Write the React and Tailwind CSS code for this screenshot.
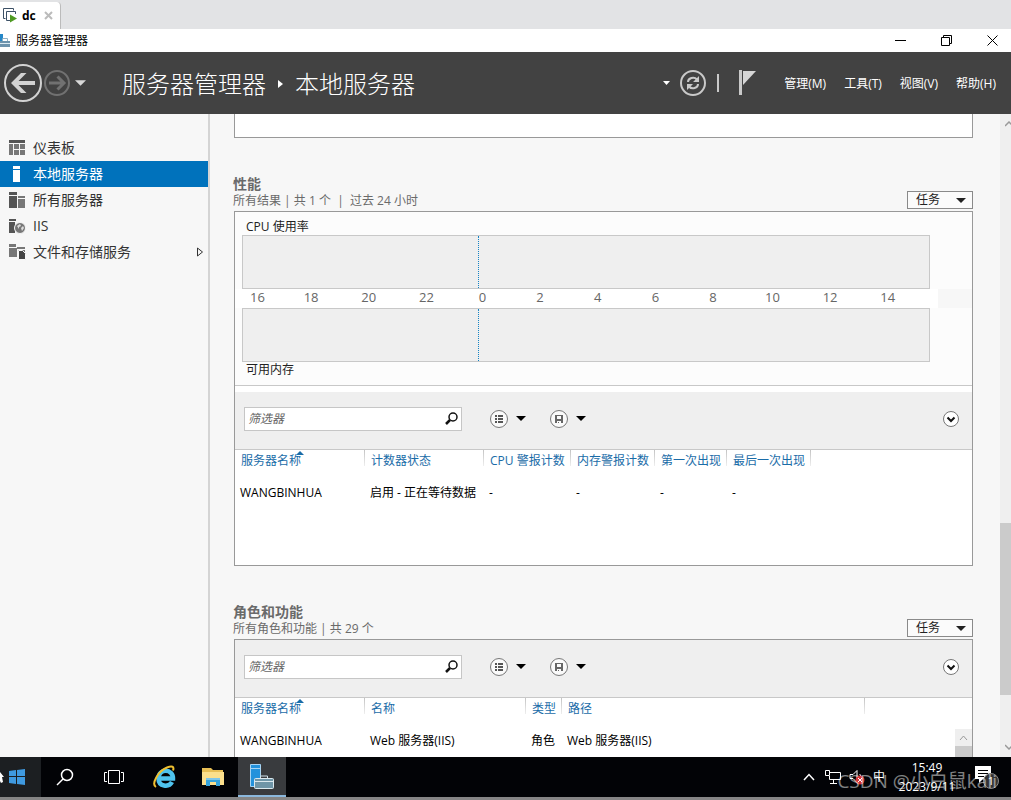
import React, { useState } from 'react';

const navItems = [
  { id: 'dashboard', label: '仪表板' },
  { id: 'local', label: '本地服务器' },
  { id: 'all', label: '所有服务器' },
  { id: 'iis', label: 'IIS' },
  { id: 'files', label: '文件和存储服务', expandable: true },
];

const menus = ['管理(M)', '工具(T)', '视图(V)', '帮助(H)'];
const hours = [16, 18, 20, 22, 0, 2, 4, 6, 8, 10, 12, 14];

const performance = {
  columns: [
    { label: '服务器名称', width: 130, sorted: true },
    { label: '计数器状态', width: 119 },
    { label: 'CPU 警报计数', width: 87 },
    { label: '内存警报计数', width: 84 },
    { label: '第一次出现', width: 72 },
    { label: '最后一次出现', width: 84 },
  ],
  rows: [['WANGBINHUA', '启用 - 正在等待数据', '-', '-', '-', '-']],
};

const roles = {
  columns: [
    { label: '服务器名称', width: 130, sorted: true },
    { label: '名称', width: 161 },
    { label: '类型', width: 36 },
    { label: '路径', width: 303 },
  ],
  rows: [['WANGBINHUA', 'Web 服务器(IIS)', '角色', 'Web 服务器(IIS)']],
};

function NavIcon({ id }) {
  return (
    <svg width="17" height="16" viewBox="0 0 17 16" aria-hidden="true">
      {id === 'dashboard' && (
        <>
          <path fill="#555" d="M0 0h16v3H0z" />
          <path fill="#777" d="M0 4h4v11H0zM5 4h5v5H5zM11 4h5v5h-5zM5 10h5v5H5zM11 10h5v5h-5z" />
        </>
      )}
      {id === 'local' && <path fill="#fff" d="M4 0h7v3H4zM4 4h7v12H4z" />}
      {id === 'all' && (
        <>
          <path fill="#555" d="M0 0h8v3H0zM0 4h8v12H0z" />
          <path fill="#777" d="M9 4h7v2H9zM9 7h7v9H9z" />
        </>
      )}
      {id === 'iis' && (
        <>
          <path fill="#555" d="M0 1h7v2H0zM0 4h6v11H0z" />
          <circle cx="11" cy="10" r="5.500" fill="#777" stroke="#f7f7f7" />
          <path fill="#ddd" d="M8 8l3-2 1 2-2 1v2zM12 10l2-2 1 2-2 3z" />
        </>
      )}
      {id === 'files' && (
        <>
          <path fill="#777" d="M0 0h7v3H0zM0 4h8v9H0zM8 3h8v2H8zM9 6h7v7H9z" />
          <path fill="#444" stroke="#f7f7f7" d="M9.500 6.500h4l3 3v6h-7z" />
        </>
      )}
    </svg>
  );
}

function Caret({ className }) {
  return (
    <svg width="10" height="5" viewBox="0 0 10 5" className={className} aria-hidden="true">
      <path fill="currentColor" d="M0 0h10L5 5z" />
    </svg>
  );
}

function WindowTab() {
  return (
    <div className="flex h-[29px] shrink-0 items-end bg-[#e2e3e5]">
      <div className="flex h-[27px] w-[61px] items-center gap-1 rounded-tr-sm border-r border-[#bbb] bg-white pl-[3px]">
        <svg width="15" height="15" viewBox="0 0 15 15" aria-hidden="true">
          <path fill="none" stroke="#3d5166" d="M2.500 10.500h-2v-10h10v2M12.500 6V3.500h-9v9H7" />
          <path fill="#4f9a22" d="M7 6.500l7 4-7 4z" />
        </svg>
        <span className="text-xs font-bold text-black">dc</span>
        <button type="button" aria-label="关闭标签" className="ml-1">
          <svg width="9" height="9" viewBox="0 0 9 9" aria-hidden="true">
            <path stroke="#bbb" strokeWidth="2" d="M1 1l7 7M8 1L1 8" />
          </svg>
        </button>
      </div>
    </div>
  );
}

function TitleBar() {
  return (
    <div className="flex h-[23px] shrink-0 items-center bg-white pr-[13px]">
      <svg width="11" height="15" viewBox="0 0 11 15" aria-hidden="true">
        <path fill="#2587c8" d="M0 1h3v8H0z" />
        <path fill="#6d93ad" d="M0 8h10v6H0z" />
        <path fill="none" stroke="#8fb0c4" d="M2.500 8V5.500h5V8" />
        <path stroke="#dcebf3" d="M0 10.500h10" />
      </svg>
      <span className="ml-[5px] flex-1 text-xs text-black">服务器管理器</span>
      <div className="flex items-center gap-[35px] text-black">
        <button type="button" aria-label="最小化">
          <svg width="11" height="11" viewBox="0 0 11 11" aria-hidden="true">
            <path stroke="currentColor" d="M0 5.500h11" />
          </svg>
        </button>
        <button type="button" aria-label="还原">
          <svg width="11" height="11" viewBox="0 0 11 11" aria-hidden="true">
            <path fill="none" stroke="currentColor" d="M.5 2.500h8v8h-8zM2.500 2.500v-2h8v8h-2" />
          </svg>
        </button>
        <button type="button" aria-label="关闭">
          <svg width="11" height="11" viewBox="0 0 11 11" aria-hidden="true">
            <path stroke="currentColor" d="M.5.5l10 10M10.500.5l-10 10" />
          </svg>
        </button>
      </div>
    </div>
  );
}

function Header() {
  return (
    <header className="flex h-[62px] shrink-0 items-center bg-[#424242] pr-[15px] pl-[3px] text-white">
      <button type="button" aria-label="后退">
        <svg width="40" height="40" viewBox="0 0 40 40" fill="none" aria-hidden="true">
          <circle cx="20" cy="20" r="18" stroke="#d2d2d2" strokeWidth="2" />
          <path stroke="#d2d2d2" strokeWidth="4" d="M32 20H11" />
          <path fill="#d2d2d2" d="M8 20L18 10h5.500L13.500 20l10 10H18z" />
        </svg>
      </button>
      <button type="button" aria-label="前进">
        <svg width="28" height="28" viewBox="0 0 28 28" fill="none" stroke="#717171" aria-hidden="true">
          <circle cx="14" cy="14" r="12" strokeWidth="2" />
          <path strokeWidth="3" d="M6 14h14M14.500 7.500L21 14l-6.500 6.500" />
        </svg>
      </button>
      <button type="button" aria-label="历史记录" className="ml-1">
        <Caret className="h-[6px] w-[11px] text-[#d8d8d8]" />
      </button>
      <h1 className="ml-9 flex flex-1 items-center pt-px text-2xl font-light whitespace-nowrap">
        <span>服务器管理器</span>
        <svg width="5" height="8" viewBox="0 0 5 8" className="mx-3" aria-hidden="true">
          <path fill="#fff" d="M0 0l5 4-5 4z" />
        </svg>
        <span>本地服务器</span>
      </h1>
      <button type="button" aria-label="通知列表">
        <svg width="7" height="4" viewBox="0 0 7 4" aria-hidden="true">
          <path fill="#fff" d="M0 0h7L3.500 4z" />
        </svg>
      </button>
      <button type="button" aria-label="刷新" className="ml-[9px]">
        <svg width="28" height="28" viewBox="0 0 28 28" fill="none" stroke="#c9c9c9" aria-hidden="true">
          <circle cx="14" cy="14" r="12" strokeWidth="2" />
          <path strokeWidth="2" d="M9 13c0-4 6-6 9-2.500M19 15c0 4-6 6-9 2.500" />
          <path fill="#c9c9c9" stroke="none" d="M20 7v6h-6zM8 21v-6h6z" />
        </svg>
      </button>
      <span className="ml-[10px] h-[18px] w-[2px] bg-[#c9c9c9]" />
      <button type="button" aria-label="通知" className="mr-7 ml-5">
        <svg width="17" height="26" viewBox="0 0 17 26" aria-hidden="true">
          <path fill="#c9c9c9" d="M0 0h3v25H0z" />
          <path fill="#d6d6d6" d="M4 1h13L4 15z" />
        </svg>
      </button>
      <nav className="flex gap-[18px] pt-[2px] text-xs">
        {menus.map((menu) => (
          <button key={menu} type="button" className="whitespace-nowrap">
            {menu}
          </button>
        ))}
      </nav>
    </header>
  );
}

function Sidebar({ active, onSelect }) {
  return (
    <nav className="w-[210px] shrink-0 border-r-2 border-[#d4d4d4] bg-[#f7f7f7] pt-[21px]">
      {navItems.map((item) => (
        <button
          key={item.id}
          type="button"
          onClick={() => onSelect(item.id)}
          className={`flex h-[26px] w-full items-center gap-[7px] pr-1 pl-[9px] text-left text-sm ${
            active === item.id ? 'bg-[#0072bc] text-white' : 'text-[#333]'
          }`}
        >
          <NavIcon id={item.id} />
          <span className="flex-1">{item.label}</span>
          {item.expandable && (
            <svg width="8" height="10" viewBox="0 0 8 10" aria-hidden="true">
              <path fill="none" stroke="#333" d="M1.500 1l5 4-5 4z" />
            </svg>
          )}
        </button>
      ))}
    </nav>
  );
}

function Toolbar() {
  return (
    <div className="flex h-[57px] items-center bg-[#efefef] pr-[13px] pb-1 pl-[9px]">
      <div className="flex h-6 w-[218px] items-center border border-[#c6c6c6] bg-white px-[3px]">
        <input
          type="text"
          aria-label="筛选器"
          placeholder="筛选器"
          className="min-w-0 flex-1 text-xs italic outline-none placeholder:text-[#666]"
        />
        <button type="button" aria-label="搜索">
          <svg width="13" height="13" viewBox="0 0 13 13" fill="none" stroke="#111" aria-hidden="true">
            <circle cx="8" cy="5" r="4" strokeWidth="1.500" />
            <path strokeWidth="2.500" d="M5 8l-4 4" />
          </svg>
        </button>
      </div>
      <button type="button" aria-label="保存的筛选条件" className="ml-7 flex items-center gap-2">
        <svg width="18" height="18" viewBox="0 0 18 18" aria-hidden="true">
          <circle cx="9" cy="9" r="8.500" fill="#fafafa" stroke="#777" />
          <path fill="#555" d="M5 5h2v2H5zM8 5h5v2H8zM5 8h2v2H5zM8 8h5v2H8zM5 11h2v2H5zM8 11h5v2H8z" />
        </svg>
        <Caret className="text-black" />
      </button>
      <button type="button" aria-label="保存查询" className="ml-6 flex items-center gap-2">
        <svg width="18" height="18" viewBox="0 0 18 18" aria-hidden="true">
          <circle cx="9" cy="9" r="8.500" fill="#fafafa" stroke="#777" />
          <path fill="#666" fillRule="evenodd" d="M5 5h8v8h-2v-2H7v2H5zM7 6v3h4V6zM8 12h1v1H8z" />
        </svg>
        <Caret className="text-black" />
      </button>
      <button type="button" aria-label="展开" className="ml-auto">
        <svg width="16" height="16" viewBox="0 0 16 16" fill="none" aria-hidden="true">
          <circle cx="8" cy="8" r="7.500" fill="#fff" stroke="#777" />
          <path stroke="#111" strokeWidth="2" d="M4.500 6.500L8 10l3.500-3.500" />
        </svg>
      </button>
    </div>
  );
}

function DataTable({ columns, rows }) {
  return (
    <table className="w-full table-fixed border-t border-[#c8c8c8] text-xs">
      <colgroup>
        {columns.map((column) => (
          <col key={column.label} style={{ width: column.width }} />
        ))}
        <col />
      </colgroup>
      <thead>
        <tr className="h-[22px] text-[#1a6ca8]">
          {columns.map((column) => (
            <th key={column.label} className="relative pl-[6px] text-left font-normal whitespace-nowrap">
              {column.label}
              {column.sorted && (
                <svg width="8" height="4" viewBox="0 0 8 4" className="absolute top-px left-[61px]" aria-hidden="true">
                  <path fill="#1a6ca8" d="M0 4l4-4 4 4z" />
                </svg>
              )}
              <span className="absolute top-0 right-0 h-4 w-px bg-linear-to-b from-[#c4c4c4] to-[#eee]" />
            </th>
          ))}
          <td />
        </tr>
      </thead>
      <tbody>
        {rows.map((row) => (
          <tr key={row[0]} className="h-[42px] text-black">
            {row.map((cell, index) => (
              <td key={index} className="pl-[5px] whitespace-nowrap">{cell}</td>
            ))}
            <td />
          </tr>
        ))}
      </tbody>
    </table>
  );
}

function Chart() {
  return (
    <div className="mr-[42px] ml-[7px] flex h-[54px] border border-[#c8c8c8] bg-[#efefef]">
      <div className="w-[34.4%] border-r border-dotted border-[#1583c4]" />
    </div>
  );
}

function Section({ title, summary, className, children }) {
  return (
    <section className="mt-[37px] shrink-0">
      <div className="flex h-9 justify-between">
        <div className="text-[#6a6a6a]">
          <h2 className="text-sm leading-[18px] font-bold">{title}</h2>
          <p className="text-xs leading-4 whitespace-pre">{summary}</p>
        </div>
        <button
          type="button"
          className="mt-4 flex h-[18px] w-[66px] items-center justify-between border border-[#8a8a8a] bg-[#fbfbfb] pr-[6px] pl-2 text-xs text-[#222]"
        >
          任务
          <Caret />
        </button>
      </div>
      <div className={`ml-px border border-[#999] bg-white ${className}`}>{children}</div>
    </section>
  );
}

function Scrollbar() {
  return (
    <div className="flex w-[11px] shrink-0 flex-col items-end overflow-hidden bg-[#efefef] py-[7px]">
      <svg width="6" height="6" viewBox="0 0 6 6" fill="none" stroke="#999" aria-hidden="true">
        <path strokeWidth="1.500" d="M0 5l4-4 4 4" />
      </svg>
      <div className="flex-[396]" />
      <div className="w-full flex-[172] bg-[#cbcbcb]" />
      <div className="flex-[49]" />
      <svg width="6" height="6" viewBox="0 0 6 6" fill="none" stroke="#999" aria-hidden="true">
        <path strokeWidth="1.500" d="M0 1l4 4 4-4" />
      </svg>
    </div>
  );
}

function Taskbar() {
  return (
    <footer className="relative flex h-[43px] shrink-0 items-stretch border-b-3 border-[#858585] bg-[#020306] text-white">
      <button type="button" aria-label="开始" className="flex w-[41px] items-center bg-[#1c1f22]">
        <svg width="26" height="20" viewBox="0 0 26 20" aria-hidden="true">
          <path fill="#fff" d="M0 5l4 5H2l1 5-2 1-1-2z" />
          <path fill="#3f9ae0" d="M9 4l7-1v6H9zM17 3l8-1v7h-8zM9 10h7v7l-7-1zM17 10h8v8l-8-1z" />
        </svg>
      </button>
      <div className="flex gap-px pl-px">
        <button type="button" aria-label="搜索" className="flex w-12 items-center justify-center pr-[2px]">
          <svg width="18" height="18" viewBox="0 0 18 18" fill="none" stroke="#fff" strokeWidth="1.500" aria-hidden="true">
            <circle cx="11" cy="7" r="5.500" />
            <path d="M7 11l-6 6" />
          </svg>
        </button>
        <button type="button" aria-label="任务视图" className="flex w-12 items-center justify-center pr-[2px]">
          <svg width="20" height="16" viewBox="0 0 20 16" fill="none" stroke="#fff" aria-hidden="true">
            <path d="M4.500 1.500h11v13h-11zM3 3.500H.5v9H3M17 3.500h2.500v9H17" />
          </svg>
        </button>
        <button type="button" aria-label="Internet Explorer" className="flex w-12 items-center justify-center">
          <svg width="24" height="24" viewBox="0 0 24 24" fill="none" aria-hidden="true">
            <path stroke="#4fc3ee" strokeWidth="4.500" d="M7 13.500h14c.3-10-14.500-10.500-14.500 0 0 8.500 10.500 9 13.500 3.500" />
            <path stroke="#f0c030" strokeWidth="2" d="M4 22C-1 19 6 6 15 2.500c5-2 7.500-1 6 3" />
          </svg>
        </button>
        <button type="button" aria-label="文件资源管理器" className="flex w-12 items-center justify-center">
          <svg width="22" height="20" viewBox="0 0 22 20" aria-hidden="true">
            <path fill="#e8bf55" d="M0 1h9l2 2h10v6H0z" />
            <path fill="#fbdf8c" d="M0 5h22v13H0z" />
            <path fill="#35a3da" d="M4 11h14v8h-4v-4H8v4H4z" />
            <path fill="#7fc6e8" d="M4 11h14v2H4z" />
          </svg>
        </button>
        <button
          type="button"
          aria-label="服务器管理器"
          className="flex w-12 items-center justify-center border-b-2 border-[#8bb8dd] bg-[#393b3e]"
        >
          <svg width="24" height="25" viewBox="0 0 24 25" aria-hidden="true">
            <path fill="#2492dc" stroke="#a7d4f3" d="M.5.5h10v22H.5z" />
            <path stroke="#a7d4f3" d="M1 4.500h9" />
            <path fill="none" stroke="#cfe0e9" d="M10.500 14v-2h7v2" />
            <rect x="4.500" y="14.500" width="19" height="10" rx="1" fill="#6f95a7" stroke="#dbe8ee" />
            <path stroke="#dbe8ee" d="M5 17.500h18" />
          </svg>
        </button>
      </div>
      <div className="ml-auto flex items-center pr-3">
        <button type="button" aria-label="显示隐藏的图标">
          <svg width="12" height="8" viewBox="0 0 12 8" fill="none" stroke="#fff" aria-hidden="true">
            <path strokeWidth="1.500" d="M1 7l5-5.500L11 7" />
          </svg>
        </button>
        <svg width="16" height="14" viewBox="0 0 16 14" fill="none" stroke="#fff" className="ml-[10px]" aria-hidden="true">
          <path d="M5 2.500h10.500v7H4.500V6M.5.5h4v5h-4zM8.500 10v3M5 13.500h7" />
        </svg>
        <svg width="16" height="16" viewBox="0 0 16 16" fill="none" stroke="#fff" className="ml-2" aria-hidden="true">
          <path d="M1 5.500h3l4-4v12l-4-4H1zM10.500 5c1.500 1 1.500 3 0 4" />
          <circle cx="11" cy="11" r="4.500" fill="#d13438" stroke="none" />
          <path d="M9 9l4 4M13 9l-4 4" />
        </svg>
        <span className="ml-2 text-xs">中</span>
        <div className="ml-3 w-[60px] text-center text-xs leading-[19px]">
          <div>15:49</div>
          <div>2023/9/11</div>
        </div>
        <button type="button" aria-label="通知中心" className="ml-[18px]">
          <svg width="24" height="24" viewBox="0 0 24 24" aria-hidden="true">
            <path fill="#fff" d="M0 1h16v13H8l-4 4v-4H0z" />
            <path stroke="#020306" d="M3 5.500h10M3 8.500h10M3 11.500h6" />
            <circle cx="16" cy="16" r="7.500" fill="#333" stroke="#888" />
            <text x="16" y="20" fill="#fff" fontSize="11" textAnchor="middle">1</text>
          </svg>
        </button>
      </div>
      <span className="pointer-events-none absolute right-[14px] bottom-1 text-[19px] leading-6 whitespace-nowrap text-white/50">
        CSDN @小白鼠kali
      </span>
    </footer>
  );
}

export default function App() {
  const [active, setActive] = useState('local');

  return (
    <div className="flex h-screen flex-col overflow-hidden bg-white font-['Open_Sans','Noto_Sans_CJK_SC',sans-serif]">
      <WindowTab />
      <TitleBar />
      <Header />
      <div className="flex min-h-0 flex-1">
        <Sidebar active={active} onSelect={setActive} />
        <main className="flex min-w-0 flex-1 flex-col overflow-hidden bg-[#f7f7f7] pr-[27px] pl-[23px]">
          <div className="ml-px h-6 shrink-0 border border-t-0 border-[#999] bg-white" />

          <Section title="性能" summary="所有结果 | 共 1 个  |  过去 24 小时" className="h-[355px]">
            {/* Usage charts */}
            <div className="h-[174px] border-b border-[#c8c8c8] bg-[#fcfcfc] pt-[7px] text-xs text-[#222]">
              <p className="pl-[11px] leading-4">CPU 使用率</p>
              <Chart />
              <div className="flex h-[19px] bg-[#f7f7f7]">
                <div className="mr-[34px] grid flex-1 grid-cols-[54fr_repeat(11,58fr)] bg-white pl-[15px] text-[13px] leading-4 text-[#666]">
                  {hours.map((hour) => (
                    <span key={hour} className={hour < 10 ? 'pl-[2px]' : ''}>{hour}</span>
                  ))}
                </div>
              </div>
              <Chart />
              <p className="pl-[11px] leading-4">可用内存</p>
            </div>
            <div className="h-[6px]" />
            <Toolbar />
            <DataTable columns={performance.columns} rows={performance.rows} />
          </Section>

          <Section title="角色和功能" summary="所有角色和功能 | 共 29 个" className="relative h-[355px]">
            <Toolbar />
            <DataTable columns={roles.columns} rows={roles.rows} />
            <div className="absolute top-[89px] right-0 bottom-0 flex w-[17px] flex-col items-center bg-[#efefef]">
              <svg width="9" height="17" viewBox="0 0 9 17" fill="none" stroke="#999" aria-hidden="true">
                <path d="M1 11l3.500-4L8 11" />
              </svg>
              <div className="w-full flex-1 bg-[#cbcbcb]" />
            </div>
          </Section>
        </main>
        <Scrollbar />
      </div>
      <Taskbar />
    </div>
  );
}
